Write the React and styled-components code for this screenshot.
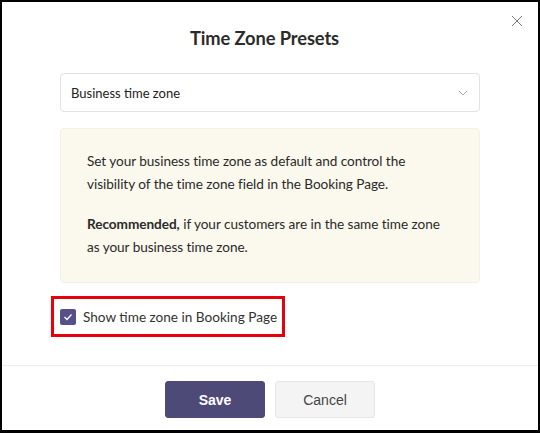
import React from "react";
import styled, { createGlobalStyle } from "styled-components";

const Global = createGlobalStyle`
  html, body { margin: 0; padding: 0; background: #000; }
  body { font-family: Lato, "Open Sans", sans-serif; }
  * { box-sizing: border-box; }
`;

const Frame = styled.div`
  width: 540px;
  height: 433px;
  padding: 2px 2px 3px 2px;
  background: #000;
`;

const Dialog = styled.div`
  position: relative;
  width: 100%;
  height: 100%;
  background: #fff;
  display: flex;
  flex-direction: column;
`;

const Close = styled.button`
  position: absolute;
  top: 11px;
  right: 13px;
  width: 16px;
  height: 16px;
  padding: 0;
  border: none;
  background: none;
  display: flex;
  align-items: center;
  justify-content: center;
`;

const Body = styled.div`
  flex: 1;
  padding: 24px 58px 0 58px;
  display: flex;
  flex-direction: column;
`;

const Title = styled.h2`
  margin: 0;
  padding-right: 11px;
  text-align: center;
  font-size: 18.3px;
  font-weight: 700;
  color: #2b2b2b;
  line-height: 24px;
  letter-spacing: -0.1px;
`;

const Select = styled.div`
  margin-top: 23px;
  height: 39px;
  border: 1px solid #e3e3e3;
  border-radius: 4px;
  display: flex;
  align-items: center;
  justify-content: space-between;
  padding: 0 11px 0 10px;
  font-size: 13px;
  color: #222;
`;

const Info = styled.div`
  margin-top: 16px;
  background: #fbf9ee;
  border: 1px solid #f3f1e6;
  border-radius: 4px;
  padding: 21px 26px 23px 26px;
  font-size: 13.6px;
  letter-spacing: -0.05px;
  line-height: 23px;
  color: #2a2a2a;
  height: 155px;
`;

const Para = styled.p`
  margin: 0 0 ${(p) => (p.$last ? 0 : 17)}px 0;
`;

const Highlight = styled.div`
  margin-top: 13px;
  margin-left: -9px;
  width: 234px;
  height: 41px;
  border: 3px solid #e8000d;
  display: flex;
  align-items: center;
  gap: 7px;
  padding-left: 6px;
  white-space: nowrap;
`;

const Box = styled.span`
  flex: none;
  width: 16px;
  height: 16px;
  border-radius: 2px;
  background: #55508a;
  display: flex;
  align-items: center;
  justify-content: center;
`;

const Label = styled.span`
  font-size: 13.6px;
  color: #333;
`;

const Footer = styled.div`
  height: 65px;
  border-top: 1px solid #ececec;
  display: flex;
  justify-content: center;
  align-items: flex-start;
  gap: 10px;
  padding-top: 15px;
`;

const Btn = styled.button`
  width: 100px;
  height: 37px;
  border-radius: 3px;
  font-family: "Liberation Sans", Arial, sans-serif;
  font-size: 14px;
  cursor: pointer;
  background: ${(p) => (p.$primary ? "#4e4a78" : "#f4f4f4")};
  color: ${(p) => (p.$primary ? "#fff" : "#444")};
  font-weight: ${(p) => (p.$primary ? 700 : 400)};
  border: 1px solid ${(p) => (p.$primary ? "#4e4a78" : "#e6e6e6")};
`;

export default function App() {
  return (
    <>
      <Global />
      <Frame>
        <Dialog>
          <Close aria-label="close">
            <svg width="12" height="12" viewBox="0 0 12 12">
              <path d="M1 1 L11 11 M11 1 L1 11" stroke="#777" strokeWidth="1" fill="none" />
            </svg>
          </Close>
          <Body>
            <Title>Time Zone Presets</Title>
            <Select>
              <span>Business time zone</span>
              <svg width="10" height="6" viewBox="0 0 10 6">
                <path d="M1 1 L5 5 L9 1" stroke="#aaa" strokeWidth="1" fill="none" />
              </svg>
            </Select>
            <Info>
              <Para>
                Set your business time zone as default and control the visibility of the time zone field in the Booking Page.
              </Para>
              <Para $last>
                <b>Recommended,</b> if your customers are in the same time zone as your business time zone.
              </Para>
            </Info>
            <Highlight>
              <Box>
                <svg width="10" height="8" viewBox="0 0 10 8">
                  <path d="M1.5 4 L4 6.5 L8.5 1.5" stroke="#fff" strokeWidth="1.3" fill="none" />
                </svg>
              </Box>
              <Label>Show time zone in Booking Page</Label>
            </Highlight>
          </Body>
          <Footer>
            <Btn $primary>Save</Btn>
            <Btn>Cancel</Btn>
          </Footer>
        </Dialog>
      </Frame>
    </>
  );
}
